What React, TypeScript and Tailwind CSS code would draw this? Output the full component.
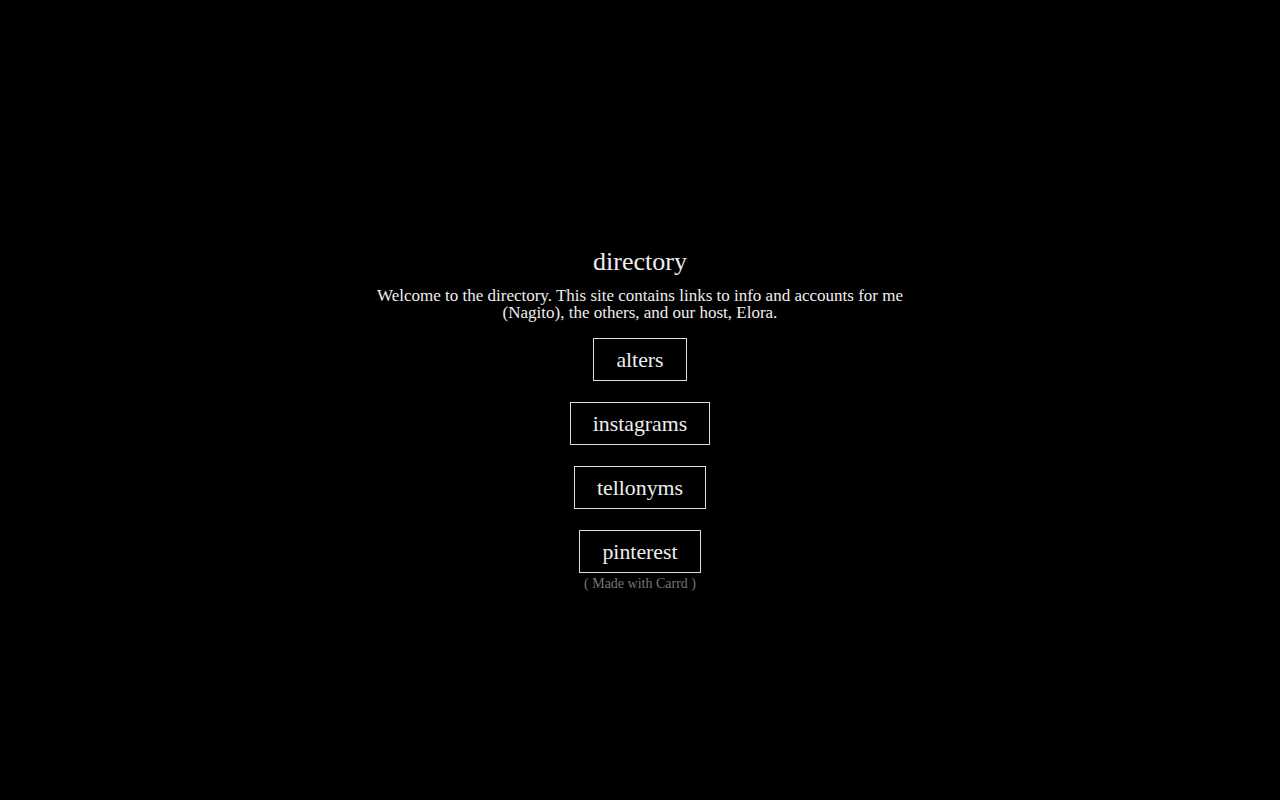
const links = ['alters', 'instagrams', 'tellonyms', 'pinterest']

const App = () => {
  return (
    <div
      className="min-h-screen bg-black text-[#eeeeee] flex flex-col items-center pt-[246px]"
      style={{ fontFamily: '"Liberation Serif", "Times New Roman", serif' }}
    >
      <h1 className="text-[26px] leading-[32px]">directory</h1>
      <p className="mt-[9px] max-w-[540px] text-center text-[17px] leading-[17px]">
        Welcome to the directory. This site contains links to info and accounts for me (Nagito),
        the others, and our host, Elora.
      </p>
      <div className="mt-[17px] flex flex-col items-center gap-[21px]">
        {links.map((label) => (
          <a
            key={label}
            href="#"
            className="block h-[43px] overflow-hidden border border-[#dddddd] px-[22px] pt-[1px] text-[21.8px] leading-[41px] text-[#eeeeee]"
          >
            {label}
          </a>
        ))}
      </div>
      <div className="mt-[1px] text-[14px] leading-[20px] text-[#777777]">( Made with Carrd )</div>
    </div>
  )
}

export default App
